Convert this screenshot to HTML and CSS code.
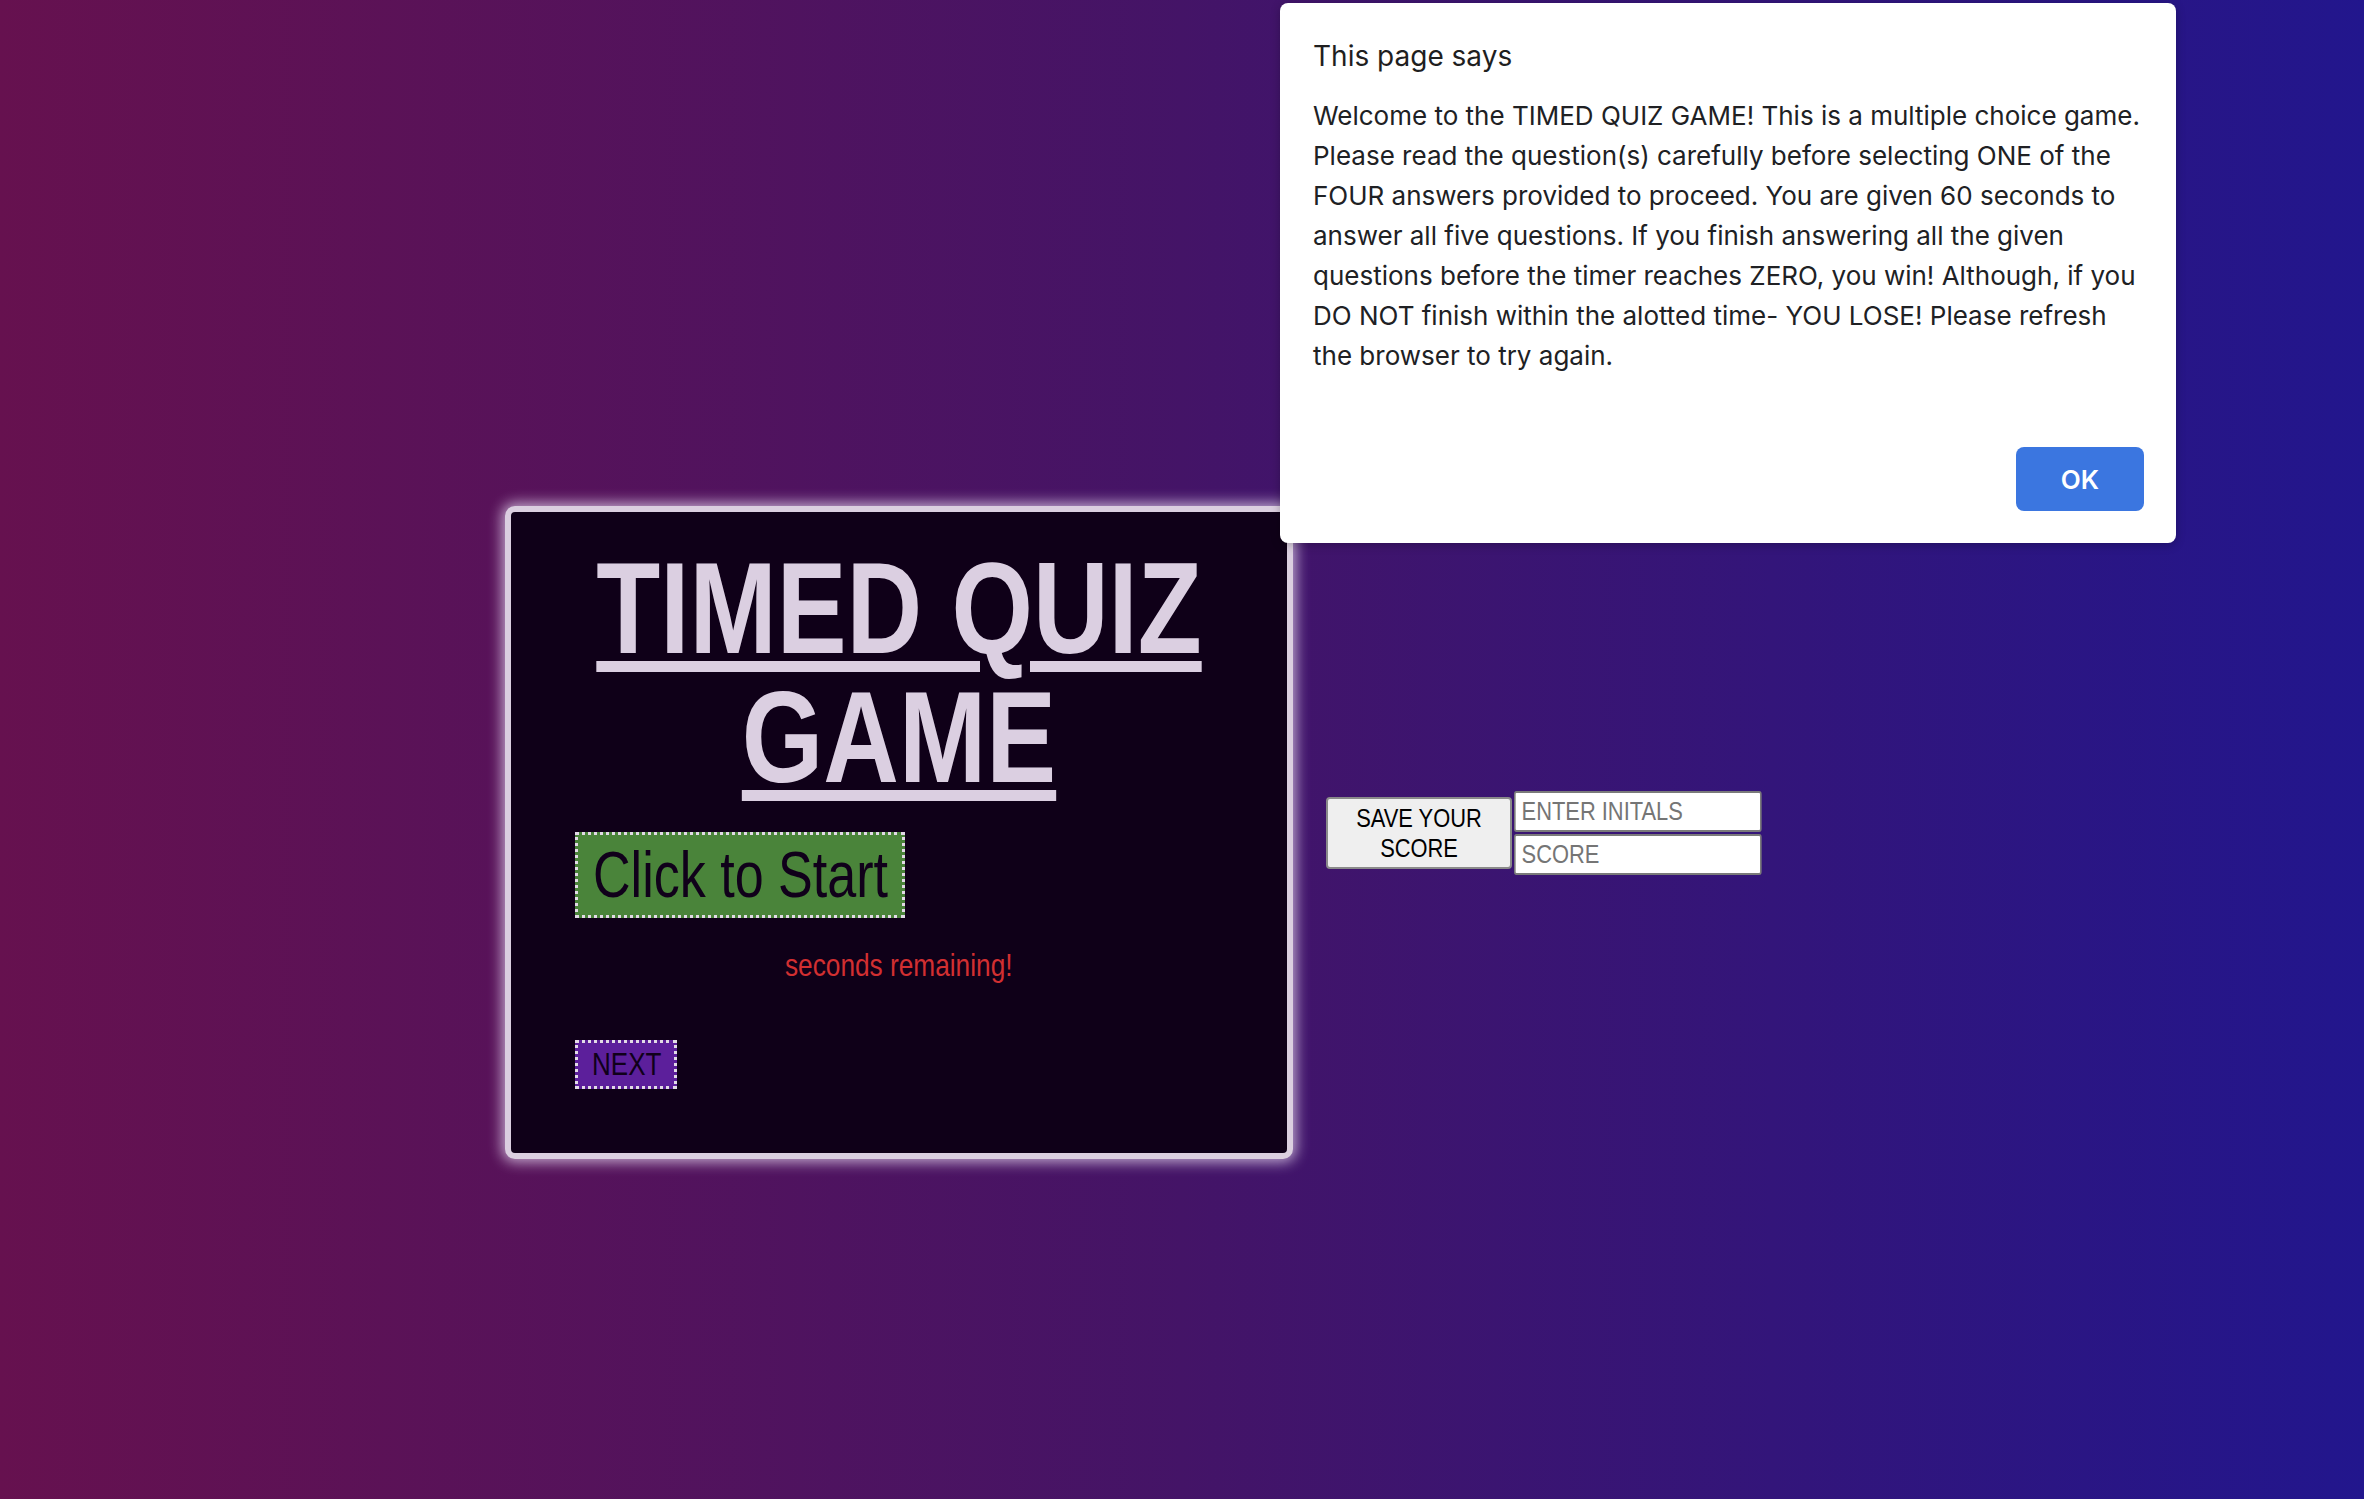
FILE: index.html
```html
<!DOCTYPE html>
<html lang="en">
<head>
<meta charset="utf-8">
<title>Timed Quiz Game</title>
<link rel="stylesheet" href="styles.css">
</head>
<body>
<main class="stage">
  <section class="card">
    <h1 class="title">TIMED QUIZ GAME</h1>
    <button class="start-btn" type="button"><span class="sx">Click to Start</span></button>
    <p class="timer"><span class="sx"><span class="count"></span>seconds remaining!</span></p>
    <button class="next-btn" type="button"><span class="sx">NEXT</span></button>
  </section>
  <form class="save">
    <button class="save-btn" type="button"><span class="sx">SAVE YOUR SCORE</span></button>
    <div class="fields">
      <input class="field" type="text" placeholder="ENTER INITALS">
      <input class="field" type="text" placeholder="SCORE">
    </div>
  </form>
</main>

<div class="dialog" role="alertdialog">
  <div class="dialog-title">This page says</div>
  <div class="dialog-body">Welcome to the TIMED QUIZ GAME! This is a multiple choice game.<br>Please read the question(s) carefully before selecting ONE of the<br>FOUR answers provided to proceed. You are given 60 seconds to<br>answer all five questions. If you finish answering all the given<br>questions before the timer reaches ZERO, you win! Although, if you<br>DO NOT finish within the alotted time- YOU LOSE! Please refresh<br>the browser to try again.</div>
  <div class="dialog-actions">
    <button class="ok-btn" type="button">OK</button>
  </div>
</div>
</body>
</html>
```

FILE: styles.css
```css
html, body {
  margin: 0;
  padding: 0;
}

body {
  min-height: 100vh;
  background: linear-gradient(to right, #66114f 0%, #441467 50%, #22168d 100%);
  font-family: "Liberation Sans", Arial, sans-serif;
  position: relative;
  overflow: hidden;
}

/* Arial Narrow look: condense the Liberation Sans glyphs horizontally */
.sx {
  display: inline-block;
  transform: scaleX(0.82);
  transform-origin: 50% 50%;
}

.stage {
  display: flex;
  align-items: center;
  gap: 33px;
  padding: 506px 0 0 505px;
}

.card {
  box-sizing: border-box;
  width: 788px;
  height: 653px;
  background: #0f0018;
  border: 6px solid #dbcfe0;
  border-radius: 10px;
  box-shadow: 0 0 14px 3px rgba(225, 210, 235, 0.8);
  padding: 0 64px;
}

.title {
  margin: 32px -64px 30px;
  font-size: 130px;
  line-height: 129px;
  font-weight: 700;
  color: #dbcfe1;
  text-align: center;
  text-decoration: underline;
  text-decoration-thickness: 11px;
  text-underline-offset: 8px;
  transform: scaleX(0.806);
}

.start-btn {
  display: block;
  margin: 0;
  padding: 0 15px;
  width: 330px;
  height: 86px;
  box-sizing: border-box;
  background: #4a843a;
  border: 3px dotted #e2dbe6;
  border-radius: 0;
  color: #10001a;
  font-family: inherit;
  font-size: 64px;
  line-height: 80px;
  text-align: left;
  white-space: nowrap;
}

.start-btn .sx,
.next-btn .sx {
  transform-origin: 0 50%;
  transform: scaleX(0.813);
}

.timer {
  margin: 29px 0 0;
  font-size: 32px;
  line-height: 37px;
  color: #d22f31;
  text-align: center;
}

.next-btn {
  display: block;
  margin: 56px 0 0;
  padding: 3px 14px;
  width: 102px;
  height: 49px;
  box-sizing: border-box;
  background: #5c1f9b;
  border: 3px dotted #e2dbe6;
  border-radius: 0;
  color: #10001a;
  font-family: inherit;
  font-size: 32px;
  line-height: 37px;
  text-align: left;
  white-space: nowrap;
}

.save {
  display: flex;
  align-items: center;
  gap: 2px;
  margin: 0;
}

.save-btn {
  box-sizing: border-box;
  width: 186px;
  height: 72px;
  padding: 4px 6px;
  background: #efefef;
  border: 2px solid #8a8a8a;
  border-radius: 4px;
  color: #000;
  font-family: inherit;
  font-size: 26.67px;
  line-height: 30px;
  text-align: center;
}

.fields {
  display: flex;
  flex-direction: column;
  gap: 2px;
  width: 248px;
}

.field {
  box-sizing: border-box;
  width: 302.4px;
  height: 41px;
  margin: 0;
  padding: 2px 7.3px;
  background: #fff;
  border: 2px solid #7a7a7a;
  border-left-width: 2.44px;
  border-right-width: 2.44px;
  border-radius: 3px;
  font-family: inherit;
  font-size: 26.67px;
  color: #000;
  transform: scaleX(0.82);
  transform-origin: 0 50%;
}

.field::placeholder {
  color: #757575;
}

.dialog {
  position: absolute;
  left: 1280px;
  top: 3px;
  box-sizing: border-box;
  width: 896px;
  height: 540px;
  padding: 33px 32px 32px 33px;
  background: #fff;
  border-radius: 8px;
  box-shadow: 0 2px 10px rgba(0, 0, 0, 0.25);
  display: flex;
  flex-direction: column;
  font-family: Inter, "Noto Sans", sans-serif;
  color: #1f1f1f;
}

.dialog-title {
  font-size: 28px;
  line-height: 40px;
}

.dialog-body {
  margin-top: 20px;
  font-size: 26px;
  line-height: 40px;
  white-space: nowrap;
  color: #202124;
}

.dialog-actions {
  margin-top: auto;
  display: flex;
  justify-content: flex-end;
}

.ok-btn {
  width: 128px;
  height: 64px;
  padding: 0;
  background: #3b76e0;
  border: none;
  border-radius: 8px;
  color: #fff;
  font-family: Inter, "Noto Sans", sans-serif;
  font-size: 26px;
  font-weight: 600;
}
```
